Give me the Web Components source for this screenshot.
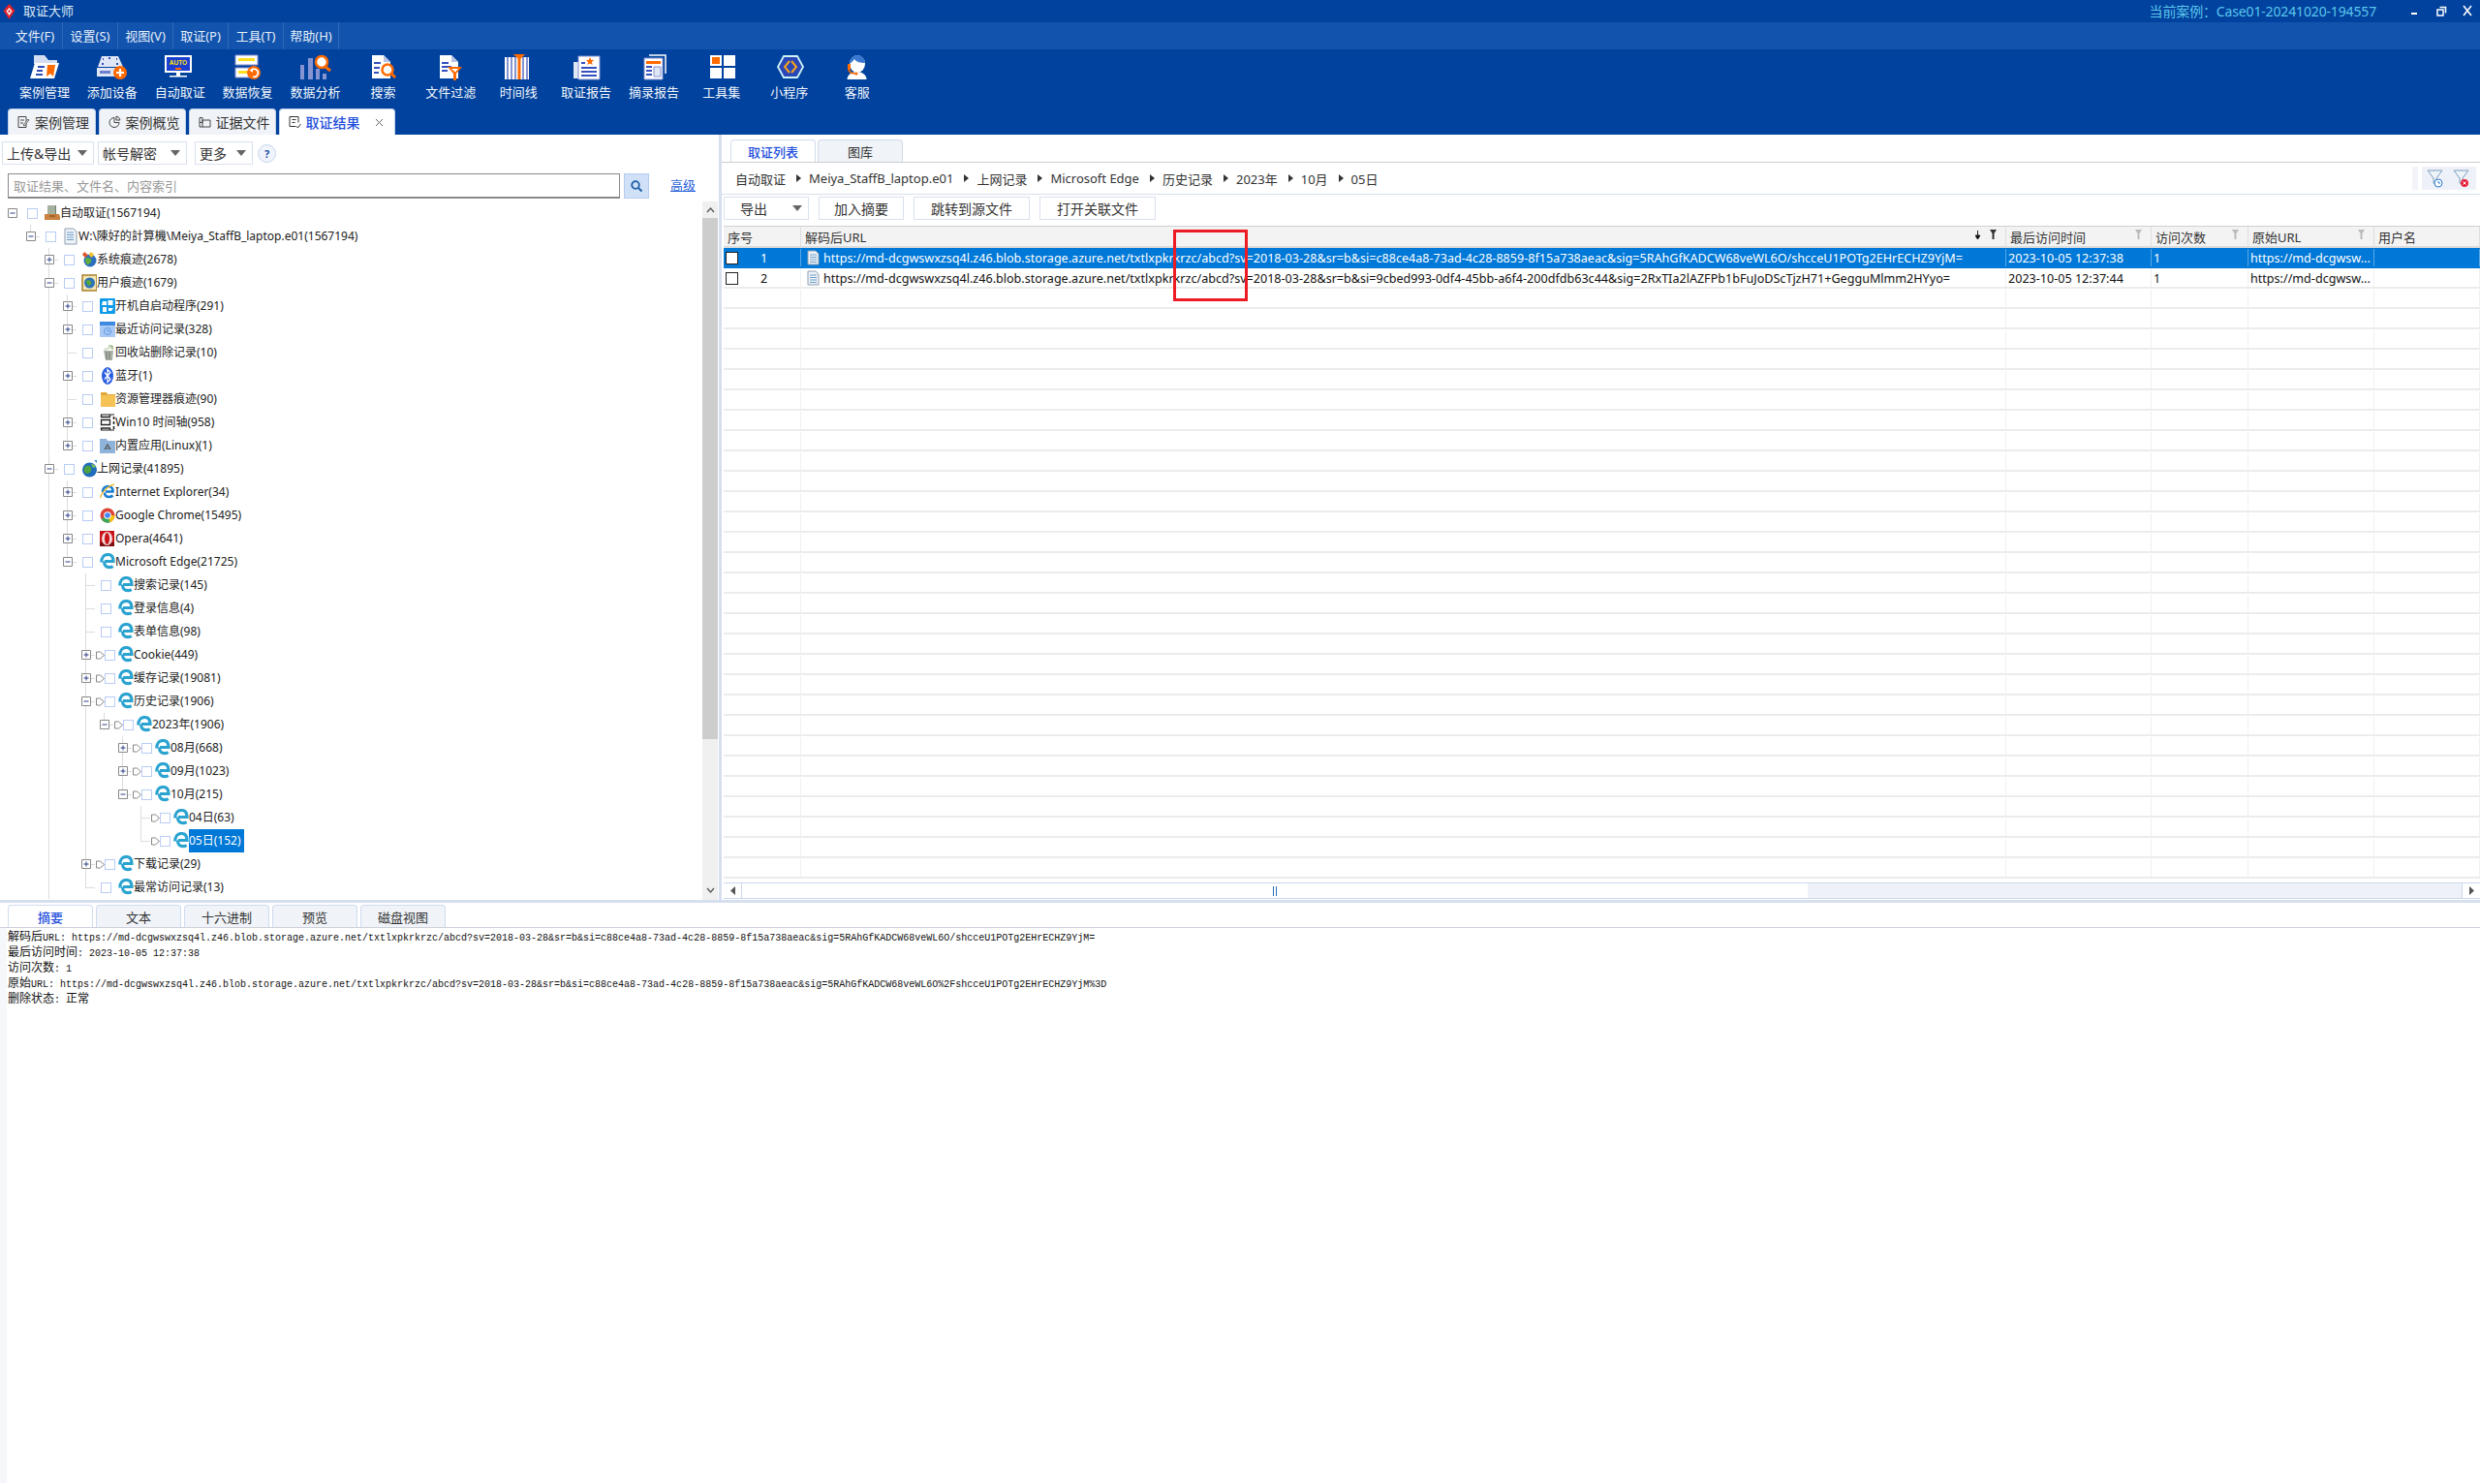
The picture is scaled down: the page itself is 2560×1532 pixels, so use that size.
<!DOCTYPE html>
<html><head><meta charset="utf-8"><title>取证大师</title>
<style>
html,body{margin:0;padding:0;background:#fff}
body{font:12px "Noto Sans","Noto Sans CJK SC",sans-serif;color:#222}
</style></head><body>
<x-app></x-app>
<script>
const ORG='#ff6a00',LAV='#8794d2',BLU='#3550bd';
const edge='<path d="M1.800 9.500c0-5 2.800-8 6.400-8 3.600 0 5.800 2.600 5.800 7H5" fill="none" stroke="#2ba3d0" stroke-width="3.200"/><path d="M4.500 8.500c0 4 2.200 6.200 5.200 6.200 1.600 0 2.900-.4 3.900-1.200" fill="none" stroke="#2ba3d0" stroke-width="3.200"/>';
const ICONS={
case:'<path d="M7 1h11l4 5h9v4H7z" fill="#d5ddf0"/><path d="M8 9h25l-5 16H3z" fill="#fff"/><path d="M11 13h7M10 17h6M9 21h7" stroke="#2f4cb5" stroke-width="2"/><path d="M21 11h8l-2 12-3-3-4 3z" fill="'+ORG+'"/>',
add:'<path d="M7 2h17l5 11H3z" fill="#dfe6f5"/><path d="M8 5h1M14 4h2M22 5h1M7 10h2M22 10h2" stroke="#3550bd" stroke-width="2"/><path d="M2 14h24v9H2z" fill="#dfe6f5"/><path d="M5 17h11v3H5z" fill="#6c80cc"/><circle cx="26" cy="19" r="7" fill="'+ORG+'"/><path d="M22 19h8M26 15v8" stroke="#fff" stroke-width="2.200"/>',
auto:'<path d="M2 1h28v18H2z" fill="#fff"/><path d="M4 3h24v14H4z" fill="#1c3fd2"/><text x="16" y="10.500" font-size="6.500" font-weight="700" text-anchor="middle" fill="#ffe100" font-family="Liberation Sans">AUTO</text><path d="M13 14h6v2h-6z" fill="'+ORG+'"/><path d="M14 19h4v3h-4zM7 22h18v1.500H7z" fill="#fff"/>',
rest:'<path d="M5 1h23v10H5z" fill="#fff" stroke="'+LAV+'"/><path d="M8 4h17v3H8z" fill="#ffdf20"/><path d="M5 14h16v10H5z" fill="#fff" stroke="'+LAV+'"/><path d="M8 17h10v3H8z" fill="#ffdf20"/><circle cx="24" cy="19" r="7" fill="'+ORG+'"/><path d="M21 17a4 4 0 1 1 2 6" fill="none" stroke="#fff" stroke-width="1.800"/><path d="M19 16h4v3z" fill="#fff"/>',
ana:'<path d="M2 11h4v15H2zM10 4h5v22h-5zM18 15h4v11h-4zM25 20h4v6h-4z" fill="'+LAV+'"/><path d="M28 13l5 4" stroke="'+ORG+'" stroke-width="3"/><circle cx="24" cy="8" r="6" fill="#fff" stroke="'+ORG+'" stroke-width="2.500"/>',
srch:'<path d="M7 1h12l7 7v17H7z" fill="#fff"/><path d="M19 1l7 7h-7z" fill="#b9c3e6"/><path d="M9 9h7M9 14h6M9 19h5" stroke="'+BLU+'" stroke-width="2"/><path d="M27 20l4 4" stroke="'+ORG+'" stroke-width="3"/><circle cx="23" cy="16" r="5.500" fill="#fff" stroke="'+ORG+'" stroke-width="2.500"/>',
filt:'<path d="M7 1h12l7 7v17H7z" fill="#fff"/><path d="M19 1l7 7h-7z" fill="#b9c3e6"/><path d="M9 9h7M9 13h10M9 17h6" stroke="'+BLU+'" stroke-width="2"/><path d="M15 13h15l-6 7v7h-3v-7z" fill="'+ORG+'"/><path d="M19 15h7l-3 3.500z" fill="#fff"/>',
time:'<path d="M4 3h25v23H4z" fill="#fff"/><path d="M6 3h2v23H6zM10 3h2v23h-2zM14 3h2v23h-2zM22 3h2v23h-2zM26 3h2v23h-2z" fill="'+LAV+'"/><path d="M17.500 3h3v23h-3z" fill="'+ORG+'"/><path d="M13 0h12l-6 6z" fill="'+ORG+'"/>',
rep:'<path d="M5 8h6v17H5z" fill="#dfe6f5"/><path d="M10 2h22v24H10z" fill="#fff" stroke="'+LAV+'"/><path d="M22 3l1.200 2.800 3 .2-2.300 2 .8 3-2.700-1.600-2.700 1.600.8-3-2.300-2 3-.2z" fill="'+ORG+'"/><path d="M13 9h4M13 14h16M13 18h16M13 22h16" stroke="'+BLU+'" stroke-width="1.800"/>',
dig:'<path d="M13 1h17v19" fill="none" stroke="#fff" stroke-width="1.500"/><path d="M8 4h19v22H8z" fill="#fff" stroke="'+LAV+'"/><path d="M10 7h15v3H10z" fill="'+ORG+'"/><path d="M10 13h6M10 17h6M10 21h6" stroke="'+BLU+'" stroke-width="1.800"/><path d="M18 13h7v10h-7z" fill="#dfe6f5" stroke="'+LAV+'"/>',
tool:'<path d="M6 1h12v11H6zM20 1h12v11H20zM6 14h12v11H6zM20 14h12v11H20z" fill="#fff"/><path d="M8 3h8v7H8z" fill="'+ORG+'"/>',
mini:'<path d="M12 2h14l6 11-6 11H12L6 13z" fill="#2a47b8" stroke="#cdf3f6" stroke-width="1.800"/><path d="M18 7l-5 6 5 6M20 7l5 6-5 6" fill="none" stroke="#f9a11b" stroke-width="2"/>',
kefu:'<path d="M8 25c0-5 5-8 10-8s10 3 10 8z" fill="#fff" transform="translate(-.5 1)"/><ellipse cx="18" cy="10" rx="8" ry="9" fill="#fff"/><path d="M10 10c0-6 4-9 8-9s8 3 8 8c-5 0-9-1-11-4-1 2-3 3-5 5z" fill="#3a78cf"/><path d="M8 10h3v6H8z" fill="'+ORG+'"/><path d="M9 16c1 3 3 4 7 4" fill="none" stroke="'+ORG+'" stroke-width="1.500"/><circle cx="17" cy="20" r="1.500" fill="'+ORG+'"/>',
book:'<path d="M3 1h9v10H3z" fill="#6f7f66"/><path d="M4 1v10M6 1v10M8 1v10M10 1v10" stroke="#dfe3d8"/><path d="M0 10h15l1 3v3H0v-3z" fill="#c9813f"/><path d="M5 12h6" stroke="#7a4a1e"/>',
doc:'<path d="M2 1h9l3 3v13H2z" fill="#eef2f7" stroke="#8fa0b3"/><path d="M4 5h7M4 7.500h7M4 10h7M4 12.500h7" stroke="#6da0c8"/>',
sys:'<circle cx="9" cy="10" r="6.500" fill="#2a6fbe"/><path d="M4 8c2-2 5-1 6 1s-1 4-3 5-3-3-3-6z" fill="#5fae3c"/><path d="M3 1l4 3-3 3-3-3z" fill="#e4572e"/><path d="M9 1l4 2-2 4-3-2z" fill="#f2c230"/>',
usr:'<path d="M1 1h15v16H1z" fill="#f3e5b6" stroke="#a8802a" stroke-width="1.500"/><circle cx="8.500" cy="9" r="5.500" fill="#2c73b9"/><path d="M5 7c2-2 4-1 5 1s-1 3-2 4-3-3-3-5z" fill="#58a83c"/>',
boot:'<path d="M1 1h14a1 1 0 0 1 1 1v14a1 1 0 0 1-1 1H1a1 1 0 0 1-1-1V2a1 1 0 0 1 1-1z" fill="#0f9be8"/><path d="M3 4h4v4H2zM8.500 3h5v5h-5zM3 10h4v5H3zM9 11h5l-2 3H9z" fill="#fff"/>',
rec:'<path d="M0 1h7l1 2h8v14H0z" fill="#a9c9f4"/><path d="M0 1h16v4H0z" fill="#3f8ae0"/><circle cx="8" cy="11" r="3.500" fill="none" stroke="#5b9be8"/><path d="M8 9v2h2" fill="none" stroke="#5b9be8"/>',
bin:'<path d="M4 5l9-3 1 2-9 3z" fill="#d8ddd0"/><path d="M4 7h10l-1 10H6z" fill="#aab2a8"/><path d="M7 8v8M10 8v8" stroke="#6f7770"/><path d="M9 2h4v4" stroke="#7ba05b" fill="none"/>',
bt:'<ellipse cx="8" cy="9" rx="6" ry="9" fill="#2c5fe0"/><path d="M5 5.500l6 7-3 3v-13l3 3-6 7" fill="none" stroke="#fff" stroke-width="1.200"/>',
fold:'<path d="M1 2h6l1 2h8v13H1z" fill="#e2a93a"/><path d="M1 5h15v12H1z" fill="#f4c255"/>',
win:'<path d="M1 1h14M1 17h14" stroke="#222" stroke-width="1.200"/><path d="M1.500 6.500h9v5h-9zM1.500 17v-2h9v2" fill="none" stroke="#222" stroke-width="1.300"/><path d="M14.500 3v3M14.500 8v3M14.500 13v3" stroke="#222" stroke-width="1.600"/><path d="M1.500 1v2.500h9V1" fill="none" stroke="#222" stroke-width="1.300"/>',
lin:'<path d="M0 2h7l1 2h8v13H0z" fill="#8fb4dc"/><path d="M5 13l3-5 3 5M6 12h4" fill="none" stroke="#555" stroke-width="1.200"/>',
web:'<circle cx="8.500" cy="10" r="7.500" fill="#1f6db8"/><path d="M3 8c2-3 6-3 7 0s-2 6-4 6-4-3-3-6z" fill="#4da43e"/><path d="M10 4c2 0 4 1 5 3l-3 1z" fill="#7fc05f"/><path d="M13 0h3v3z" fill="#3f8ad0"/>',
ie:'<path d="M3 9c0-4 2.500-6 5.500-6s5 2 5 5.500H6M5 9.500c0 3 2 4.500 4.500 4.500 1.500 0 3-.5 4-1.500" fill="none" stroke="#1a7fd1" stroke-width="2.600"/><path d="M1 15C0 11 9 2 15 1" fill="none" stroke="#f0b429" stroke-width="1.300"/>',
chr:'<circle cx="8" cy="9" r="7.500" fill="#db4437"/><path d="M8 9L1.500 12.800A7.500 7.500 0 0 0 11 16z" fill="#3aa757"/><path d="M8 9h7.500a7.500 7.500 0 0 1-5 7z" fill="#f4c20d"/><circle cx="8" cy="9" r="3.800" fill="#fff"/><circle cx="8" cy="9" r="2.800" fill="#4285f4"/>',
op:'<path d="M0 1h15v16H0z" fill="#c8141b"/><path d="M0 13h15v4H0z" fill="#7d0d11"/><ellipse cx="7.500" cy="9" rx="5.500" ry="7" fill="#f4d9d9"/><ellipse cx="7.500" cy="9" rx="2.500" ry="6" fill="#c8141b"/>',
edge:edge};
function def(n,css,fn){customElements.define(n,class extends HTMLElement{connectedCallback(){if(this.shadowRoot)return;this.attachShadow({mode:'open'}).innerHTML='<style>'+css+'</style>'+fn(this)}})}
const a=(e,k)=>e.getAttribute(k)||'';
def('x-ico',':host{display:inline-flex;flex:none}svg{display:block}',e=>{const w=+a(e,'w')||16,h=+a(e,'h')||18;return `<svg width="${w}" height="${h}" viewBox="0 0 ${w} ${h}">${ICONS[a(e,'name')]}</svg>`});
def('x-title',`:host{display:flex;align-items:center;height:23px;box-sizing:border-box;padding-bottom:2px;background:#00429d;color:#dfe9f7;font-size:13px}
.t{margin-left:8px}.c{margin-left:auto;color:#5cc6ee;font-size:14px;letter-spacing:-.15px}.w{display:flex;margin-left:32px;margin-right:7px;gap:14px;align-items:center}`,
()=>`<svg style="margin:2px 0 0 3px;display:block" width="13" height="16" viewBox="0 0 13 16"><path d="M6.500 0l6 7-6 9-6-9z" fill="#e0202a"/><path d="M6.500 4l3 3.500-3 4.500-3-4.500z" fill="#fff"/><path d="M6.500 6l1.300 1.500-1.300 2-1.300-2z" fill="#e0202a"/></svg><span class="t">取证大师</span><span class="c">当前案例：Case01-20241020-194557</span>
<span class="w"><svg width="14" height="12"><path d="M4 8h6v2H4z" fill="#fff"/></svg><svg width="14" height="14"><path d="M5.500 3.500h6v6M3 6h6v6H3z" fill="none" stroke="#fff" stroke-width="1.500"/></svg><svg width="12" height="12"><path d="M2 1l8 10M10 1L2 11" stroke="#fff" stroke-width="1.600"/></svg></span>`);
def('x-menu',`:host{display:flex;height:28px;background:#1254ad;color:#e6eefa;font-size:13px;padding-left:8px}
span{border-right:1px solid #2c68b8;display:flex;align-items:center;justify-content:center;padding-bottom:2px;box-sizing:border-box;width:57px}`,
()=>['文件(F)','设置(S)','视图(V)','取证(P)','工具(T)','帮助(H)'].map(s=>`<span>${s}</span>`).join(''));
def('x-tool',`:host{display:flex;flex-direction:column;align-items:center;width:69.900px;color:#f1f5fc;font-size:13px;line-height:18px}
x-ico{margin-bottom:2px;width:36px}`,e=>`<x-ico name="${a(e,'i')}" w="36" h="28"></x-ico><slot></slot>`);
def('x-toolbar',`:host{display:block;height:88px;background:#00429d;box-sizing:border-box;padding:5px 0 0 11px}
.r{display:flex;height:50px}.tabs{display:flex;margin:6px 0 0 -3px;gap:2.500px}`,
()=>`<div class="r">${[['case','案例管理'],['add','添加设备'],['auto','自动取证'],['rest','数据恢复'],['ana','数据分析'],['srch','搜索'],['filt','文件过滤'],['time','时间线'],['rep','取证报告'],['dig','摘录报告'],['tool','工具集'],['mini','小程序'],['kefu','客服']].map(x=>`<x-tool i="${x[0]}">${x[1]}</x-tool>`).join('')}</div>
<div class="tabs"><x-apptab i="a" style="width:91px">案例管理</x-apptab><x-apptab i="b" style="width:90.500px">案例概览</x-apptab><x-apptab i="c" style="width:90.500px">证据文件</x-apptab><x-apptab i="d" on style="width:120px">取证结果</x-apptab></div>`);
const TI={a:'<path d="M2 1.500h8v11H2zM4 5h4M4 8h3" fill="none" stroke="#444"/><path d="M7 10l5-6 1 1-5 6z" fill="#fff" stroke="#444" stroke-width=".8"/>',b:'<path d="M7 2.500a5 5 0 1 0 5 5H7z" fill="none" stroke="#444"/><path d="M9 1a5 5 0 0 1 4 4H9z" fill="none" stroke="#444"/>',c:'<path d="M2 2.500h3v5H2zM5 5h8v7H5z M2 7.500v4.500h3" fill="none" stroke="#444"/>',d:'<path d="M2 1.500h9v6M2 1.500v10h6M4.500 4.500h4M4.500 7.500h3" fill="none" stroke="#333"/><path d="M8.500 11l2 2 3-4" fill="none" stroke="#333"/>'};
def('x-apptab',`:host{display:flex;align-items:center;height:27px;box-sizing:border-box;background:#f0f3f8;border:1px solid #bfd2ee;border-bottom:0;border-radius:4px 4px 0 0;font-size:14px;color:#333;padding-left:8px}
:host([on]){background:#fff;color:#1f4fdc;font-weight:500}svg{margin-right:5px;flex:none}.x{margin-left:auto;margin-right:11px;color:#666;display:block}`,
e=>`<svg width="14" height="14">${TI[a(e,'i')]}</svg><slot></slot>${e.hasAttribute('on')?'<svg class="x" style="margin-right:4px;margin-left:auto" width="9" height="9"><path d="M1 1l7 7M8 1L1 8" stroke="#666"/></svg><span style="width:7px"></span>':''}`);
def('x-btn',`:host{display:flex;align-items:center;justify-content:space-between;height:24px;box-sizing:border-box;border:1px solid #d9e1ef;font-size:14px;color:#333;padding:0 6px 0 4px;background:#fff;white-space:nowrap}
i{border:5px solid transparent;border-top:6px solid #666;border-bottom:0;margin-left:4px}`,e=>`<span><slot></slot></span>${e.hasAttribute('caret')?'<i></i>':''}`);
def('x-exp',':host{display:block;width:10px;height:10px;flex:none}svg{display:block}',e=>`<svg width="10" height="10"><path d="M.5.500h9v9h-9z" fill="#fff" stroke="#888"/><path d="M2.500 5h5${a(e,'t')=='+'?'M5 2.500v5':''}" stroke="#2c3f87" fill="none"/></svg>`);
def('x-node',`:host{display:flex;align-items:center;height:24px;font-size:12px;color:#222;white-space:nowrap;background-repeat:no-repeat}
.c{width:11px;height:11px;box-sizing:border-box;border:1px solid #b8ccf6;background:#fff;flex:none}
.sp{flex:none}.n{height:24px;line-height:24px;padding-right:1px}:host([sel]) .n{background:#0078d7;color:#fff;padding-right:3px}`,
e=>{const L=+a(e,'l'),x=a(e,'x'),tri=e.hasAttribute('tri');
 const gx=n=>12+19*n, bg=[],sz=[],pos=[];
 const add=(s,p)=>{bg.push('linear-gradient(#dcdcdc,#dcdcdc)');sz.push(s);pos.push(p)};
 a(e,'g').split(',').filter(Boolean).forEach(n=>add('1px 100%',gx(+n)+'px 0'));
 if(a(e,'own')=='f')add('1px 100%',gx(L)+'px 0'); if(a(e,'own')=='h')add('1px 50%',gx(L)+'px 0');
 if(L>0)add('10px 1px',gx(L)+'px 12px');
 e.style.backgroundImage=bg.join(',');e.style.backgroundSize=sz.join(',');e.style.backgroundPosition=pos.join(',');
 return `<span class="sp" style="width:${8+19*L}px"></span>${x?`<x-exp t="${x}"></x-exp>`:'<span class="sp" style="width:10px"></span>'}<span class="sp" style="width:${tri?5:10}px"></span>${tri?'<svg width="9" height="9" style="flex:none"><path d="M.5 1H4.500L8.500 4.500 4.500 8H.5z" fill="#fff" stroke="#888"/></svg>':''}<span class="c"></span><span class="sp" style="width:${tri?3:7}px"></span><x-ico name="${a(e,'i')}"></x-ico><span class="n"><slot></slot></span>`});
const NODES=[
[0,'-','book','自动取证(1567194)','',''],
[1,'-','doc','W:\\陳好的計算機\\Meiya_StaffB_laptop.e01(1567194)','','h'],
[2,'+','sys','系统痕迹(2678)','','f'],
[2,'-','usr','用户痕迹(1679)','','f'],
[3,'+','boot','开机自启动程序(291)','2','f'],
[3,'+','rec','最近访问记录(328)','2','f'],
[3,'','bin','回收站删除记录(10)','2','f'],
[3,'+','bt','蓝牙(1)','2','f'],
[3,'','fold','资源管理器痕迹(90)','2','f'],
[3,'+','win','Win10 时间轴(958)','2','f'],
[3,'+','lin','内置应用(Linux)(1)','2','h'],
[2,'-','web','上网记录(41895)','','f'],
[3,'+','ie','Internet Explorer(34)','2','f'],
[3,'+','chr','Google Chrome(15495)','2','f'],
[3,'+','op','Opera(4641)','2','f'],
[3,'-','edge','Microsoft Edge(21725)','2','h'],
[4,'','edge','搜索记录(145)','2','f'],
[4,'','edge','登录信息(4)','2','f'],
[4,'','edge','表单信息(98)','2','f'],
[4,'+','edge','Cookie(449)','2','f',1],
[4,'+','edge','缓存记录(19081)','2','f',1],
[4,'-','edge','历史记录(1906)','2','f',1],
[5,'-','edge','2023年(1906)','2,4','h',1],
[6,'+','edge','08月(668)','2,4','f',1],
[6,'+','edge','09月(1023)','2,4','f',1],
[6,'-','edge','10月(215)','2,4','h',1],
[7,'','edge','04日(63)','2,4','f',1],
[7,'','edge','05日(152)','2,4','h',1,1],
[4,'+','edge','下载记录(29)','2','f',1],
[4,'','edge','最常访问记录(13)','2','h']];
def('x-vbar',`:host{display:flex;flex-direction:column;width:16px;flex:none;background:#f0f0f0}
.a{height:17px;display:flex;align-items:center;justify-content:center}.t{height:538px;background:#cdcdcd}.f{flex:1}`,
()=>`<div class="a"><svg width="9" height="6"><path d="M1 5l3.500-4L8 5" fill="none" stroke="#555" stroke-width="1.300"/></svg></div><div class="t"></div><div class="f"></div><div class="a" style="height:20px"><svg width="9" height="6"><path d="M1 1l3.500 4L8 1" fill="none" stroke="#555" stroke-width="1.300"/></svg></div>`);
def('x-tree',`:host{display:flex;height:721px;margin-top:3px;overflow:hidden}.r{flex:1;overflow:hidden}`,
()=>`<div class="r">${NODES.map(n=>`<x-node l="${n[0]}" x="${n[1]}" i="${n[2]}" g="${n[4]}" own="${n[5]}" ${n[6]?'tri':''} ${n[7]?'sel':''}>${n[3]}</x-node>`).join('')}</div><x-vbar></x-vbar>`);
def('x-left',`:host{display:block;width:741px;flex:none}
.tb{display:flex;align-items:center;padding:7px 0 0 2px;height:24px}
.s{display:flex;align-items:center;margin:9px 0 0 8px;height:26px}
.in{width:632px;height:26px;box-sizing:border-box;border:1px solid #8a8a8a;border-bottom-width:2px;color:#999;font-size:13px;line-height:24px;padding-left:5px}
.sb{width:26px;height:26px;background:#cfe0f7;border:1px solid #b5cdf0;box-sizing:border-box;margin-left:4px;margin-top:-1px;display:flex;align-items:center;justify-content:center}
.adv{margin:-3px 0 0 22px;color:#2a63d8;text-decoration:underline;font-size:13px}
.q{width:19px;height:19px;border-radius:50%;border:1px solid #c5d5ee;background:#f1f4fa;color:#1f4fa8;font:700 11px "Noto Sans";display:flex;align-items:center;justify-content:center;box-sizing:border-box;margin-left:5px}`,
()=>`<div class="tb"><x-btn caret style="width:95px">上传&amp;导出</x-btn><x-btn caret style="width:92px;margin-left:4px">帐号解密</x-btn><x-btn caret style="width:60px;margin-left:8px">更多</x-btn><span class="q">?</span></div>
<div class="s"><div class="in">取证结果、文件名、内容索引</div><div class="sb"><svg width="14" height="14"><circle cx="6" cy="6" r="3.800" fill="none" stroke="#1f5fa8" stroke-width="1.800"/><path d="M9 9l3.500 3.500" stroke="#1f5fa8" stroke-width="2"/></svg></div><span class="adv">高级</span></div><x-tree></x-tree>`);
def('x-ptab',`:host{display:flex;align-items:center;justify-content:center;width:88px;height:23px;box-sizing:border-box;background:#f0f3f8;border:1px solid #d0dcee;border-bottom:0;border-radius:4px 4px 0 0;font-size:13px;color:#333}
:host([on]){background:#fff;color:#1f4fdc;font-weight:500}`,()=>'<slot></slot>');
def('x-crumb',`:host{display:flex;align-items:center;height:33px;padding-left:14px;font-size:13px;color:#333;white-space:nowrap;box-sizing:border-box;border-bottom:1px solid #d8e0ee}
i{border:4px solid transparent;border-left:5px solid #333;border-right:0;margin:0 8px 0 11px}
.f{margin-left:auto;display:flex;align-items:center;height:24px;margin-right:4px;gap:9px;padding:0 6px 0 15px;background:linear-gradient(90deg,#f2f4f9 6px,#fff 6px,#fff 10px,#eef2f8 10px)}`,
()=>['自动取证','Meiya_StaffB_laptop.e01','上网记录','Microsoft Edge','历史记录','2023年','10月','05日'].map(s=>`<span>${s}</span>`).join('<i></i>')+`<span class="f"><svg width="18" height="20"><path d="M1 2h15L10 10v7l-3-2v-5z" fill="#eef3fa" stroke="#7f9bbd"/><circle cx="12" cy="15" r="4" fill="#fff" stroke="#2a78d0"/><path d="M12 13v2h2" fill="none" stroke="#2a78d0"/></svg><svg width="18" height="20"><path d="M1 2h15L10 10v7l-3-2v-5z" fill="#eef3fa" stroke="#7f9bbd"/><circle cx="12" cy="15" r="4" fill="#e8203a"/><path d="M10.500 13.500l3 3M13.500 13.500l-3 3" stroke="#fff"/></svg></span>`);
const COL='grid-template-columns:80px 1244px 150px 100px 130px 1fr';
const U='https://md-dcgwswxzsq4l.z46.blob.storage.azure.net/txtlxpkrkrzc/abcd?sv=2018-03-28&amp;sr=b&amp;si=';
const FL='<svg width="7" height="10" style="display:block"><path d="M0 0h7L4.500 4v6h-2V4z" fill="#bbb"/></svg>';
const docI='<svg width="13" height="16" style="flex:none;margin-right:4px"><path d="M1 1h8l3 3v11H1z" fill="#eef2f7" stroke="#8fa0b3"/><path d="M3 5h7M3 7.500h7M3 10h7M3 12.500h7" stroke="#6da0c8"/></svg>';
def('x-grid',`:host{display:block;position:relative;height:676px;overflow:hidden;font-size:12.580px;color:#111;margin-left:2px}
.h,.r{display:grid;${COL}}
.h{height:23px;box-sizing:border-box;background:#f3f3f3;border-top:1px solid #d0d0d0;border-bottom:2px solid #dcdcdc;font-size:13px;color:#333}
.h>div{border-right:1px solid #dedede;padding-left:4px;display:flex;align-items:center;position:relative}
.f{margin-left:auto;margin-right:9px;align-self:flex-start;margin-top:3px;display:flex;gap:10px}
.r{height:21px;box-sizing:border-box;border-bottom:2px solid #ececec;padding-top:1px}
.r>div{border-right:1px solid #f0f0f0;padding-left:2px;display:flex;align-items:center;overflow:hidden;white-space:nowrap;min-width:0}
.r.s{background:#0078d7;color:#fff;border-bottom-color:#0078d7}.r.s>div{border-right-color:#5aa8e6}
.ck{width:13px;height:13px;box-sizing:border-box;border:1.500px solid #222;background:#fff;flex:none;margin-right:23px}
.red{position:absolute;left:464px;top:4px;width:77px;height:74px;box-sizing:border-box;border:3px solid #ed1c24}`,
()=>{const row=(n,t,sel,u)=>`<div class="r ${sel?'s':''}"><div><span class="ck"></span><span>${n}</span></div><div style="padding-left:6px">${docI}<span>${U+u}</span></div><div>${t}</div><div>1</div><div><span>https://md-dcgwsw...</span></div><div></div></div>`;
let blank='';for(let i=0;i<29;i++)blank+='<div class="r"><div></div><div></div><div></div><div></div><div></div><div></div></div>';
return `<div class="h"><div>序号</div><div>解码后URL<span class="f"><svg width="5" height="10" style="margin-top:1px"><path d="M2.500 0v6M0 5l2.500 4L5 5z" stroke="#222" stroke-width="1"/></svg><svg width="7" height="10"><path d="M0 0h7L4.500 4v6h-2V4z" fill="#333"/></svg></span></div><div>最后访问时间<span class="f">${FL}</span></div><div>访问次数<span class="f">${FL}</span></div><div>原始URL<span class="f">${FL}</span></div><div>用户名</div></div>
${row(1,'2023-10-05 12:37:38',1,'c88ce4a8-73ad-4c28-8859-8f15a738aeac&amp;sig=5RAhGfKADCW68veWL6O/shcceU1POTg2EHrECHZ9YjM=')}${row(2,'2023-10-05 12:37:44',0,'9cbed993-0df4-45bb-a6f4-200dfdb63c44&amp;sig=2RxTIa2lAZFPb1bFuJoDScTjzH71+GegguMlmm2HYyo=')}${blank}<div class="red"></div>`});
def('x-hbar',`:host{display:flex;align-items:center;height:17px;margin:2px 0 0 2px;box-sizing:border-box;border-top:1px solid #ccd8ef;border-bottom:1px solid #ccd8ef}
.a{width:18px;display:flex;justify-content:center;flex:none}.t{width:1100px;height:100%;background:#fff;border-left:1px solid #ccd8ef;display:flex;align-items:center;justify-content:center;box-sizing:content-box}.f{flex:1;height:100%;background:#eef1f7;border-right:1px solid #ccd8ef}`,
()=>`<div class="a"><svg width="5" height="9"><path d="M5 0v9L0 4.500z" fill="#555"/></svg></div><div class="t"><svg width="5" height="10"><path d="M.5 0v10M3.500 0v10" stroke="#2a6fb8"/></svg></div><div class="f"></div><div class="a"><svg width="5" height="9"><path d="M0 0v9l5-4.500z" fill="#555"/></svg></div>`);
def('x-right',`:host{display:block;flex:1;min-width:0}
.tabs{display:flex;gap:2px;padding:5px 0 0 9px;height:23px;box-sizing:content-box;border-bottom:1px solid #ccc}
.b{display:flex;gap:10px;padding:2px 0 6px 2px}`,
()=>`<div class="tabs"><x-ptab on>取证列表</x-ptab><x-ptab>图库</x-ptab></div><x-crumb></x-crumb>
<div class="b"><x-btn caret style="width:88px;justify-content:space-between;padding-left:16px">导出</x-btn><x-btn style="width:88px;justify-content:center;padding:0">加入摘要</x-btn><x-btn style="width:120px;justify-content:center;padding:0">跳转到源文件</x-btn><x-btn style="width:120px;justify-content:center;padding:0">打开关联文件</x-btn></div><x-grid></x-grid><x-hbar></x-hbar>`);
def('x-dtab',`:host{display:flex;align-items:center;justify-content:center;width:88px;height:23px;box-sizing:border-box;background:#f0f3f8;border:1px solid #d0dcee;border-bottom:0;border-radius:4px 4px 0 0;font-size:13px;color:#333}
:host([on]){background:#fff;color:#1f4fdc;font-weight:500}`,()=>'<slot></slot>');
def('x-detail',`:host{display:block;flex:1}
.t{display:flex;gap:3px;padding:2px 0 0 8px;border-bottom:1px solid #cdd0dc;height:23px;box-sizing:content-box}
.b{font:10px/16px "Liberation Mono","Noto Sans CJK SC",monospace;color:#111;padding-left:8px;background:linear-gradient(90deg,#f6f7fa 7px,#fff 7px);height:573px;box-sizing:border-box;white-space:pre}
.l{height:16px;display:flex;align-items:baseline;white-space:pre}
.b b{font:400 12px/16px "Noto Sans CJK SC",sans-serif}`,
()=>{const c=s=>`<b>${s}</b>`;const base='https://md-dcgwswxzsq4l.z46.blob.storage.azure.net/txtlxpkrkrzc/abcd?sv=2018-03-28&amp;sr=b&amp;si=c88ce4a8-73ad-4c28-8859-8f15a738aeac&amp;sig=5RAhGfKADCW68veWL6O';
return `<div class="t"><x-dtab on>摘要</x-dtab><x-dtab>文本</x-dtab><x-dtab>十六进制</x-dtab><x-dtab>预览</x-dtab><x-dtab>磁盘视图</x-dtab></div><div class="b"><div class="l">${c('解码后')}<span>URL: ${base}/shcceU1POTg2EHrECHZ9YjM=</span></div><div class="l">${c('最后访问时间')}<span>: 2023-10-05 12:37:38</span></div><div class="l">${c('访问次数')}<span>: 1</span></div><div class="l">${c('原始')}<span>URL: ${base}%2FshcceU1POTg2EHrECHZ9YjM%3D</span></div><div class="l">${c('删除状态')}<span>: </span>${c('正常')}</div></div>`});
def('x-app',`:host{display:flex;flex-direction:column;width:2560px;height:1532px;overflow:hidden;background:#fff}
.m{display:flex;height:790px}.d{width:3px;margin-left:1px;background:#d5dfef;flex:none}.h{height:3px;background:#d5dfef;flex:none}`,
()=>`<x-title></x-title><x-menu></x-menu><x-toolbar></x-toolbar><div class="m"><x-left></x-left><div class="d"></div><x-right></x-right></div><div class="h"></div><x-detail></x-detail>`);
</script></body></html>
